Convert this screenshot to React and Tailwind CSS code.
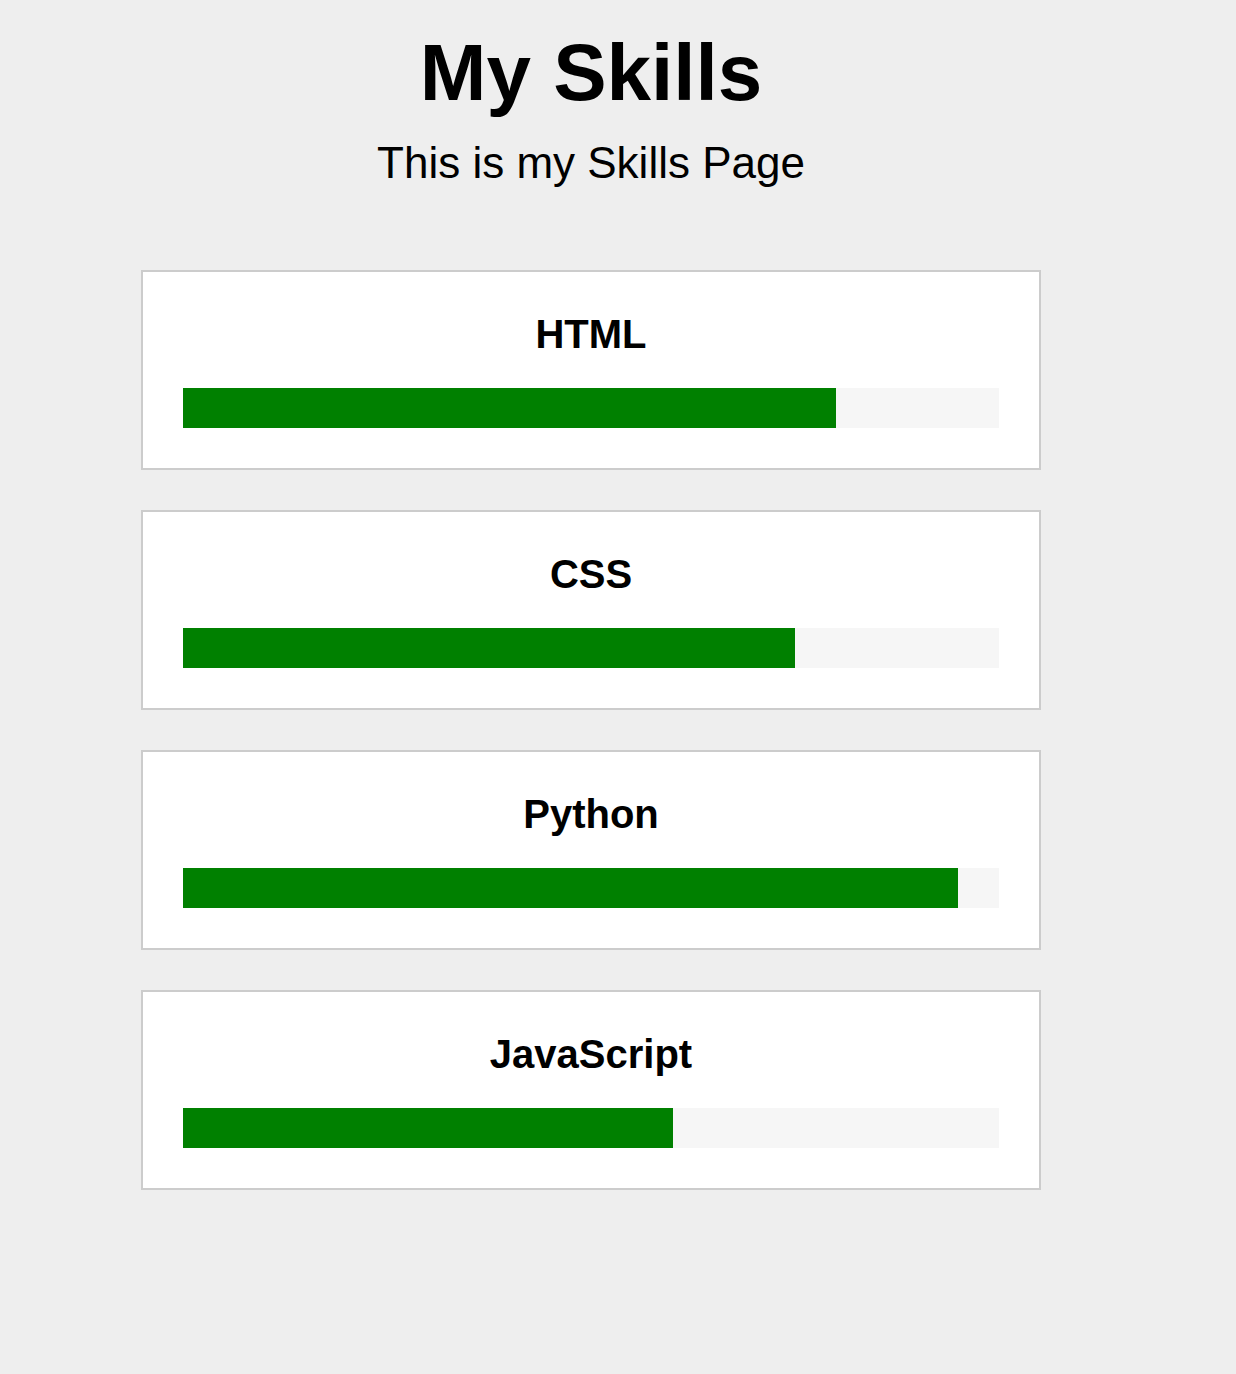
import React from 'react';

const skills = [
  { name: 'HTML', level: 80 },
  { name: 'CSS', level: 75 },
  { name: 'Python', level: 95 },
  { name: 'JavaScript', level: 60 },
];

function SkillCard({ name, level }) {
  return (
    <div className="w-[900px] h-[200px] bg-white border-2 border-[#cccccc] p-10">
      <h3 className="text-center font-bold text-[40px] leading-[44px] mb-[32px]">{name}</h3>
      <div className="h-10 bg-[#f6f6f6]">
        <div className="h-full bg-[#008000]" style={{ width: `${level}%` }} />
      </div>
    </div>
  );
}

export default function App() {
  return (
    <div className="min-h-[1374px] bg-[#eeeeee] text-black font-['Liberation_Sans',Arial,sans-serif]">
      <div className="w-[1182px] flex flex-col items-center pt-[27px]">
        <h1 className="font-bold text-[80px] leading-[92px]">My Skills</h1>
        <p className="mt-[19px] text-[44px] leading-[50px]">This is my Skills Page</p>
        <div className="mt-[82px] flex flex-col gap-10">
          {skills.map((s) => (
            <SkillCard key={s.name} {...s} />
          ))}
        </div>
      </div>
    </div>
  );
}
